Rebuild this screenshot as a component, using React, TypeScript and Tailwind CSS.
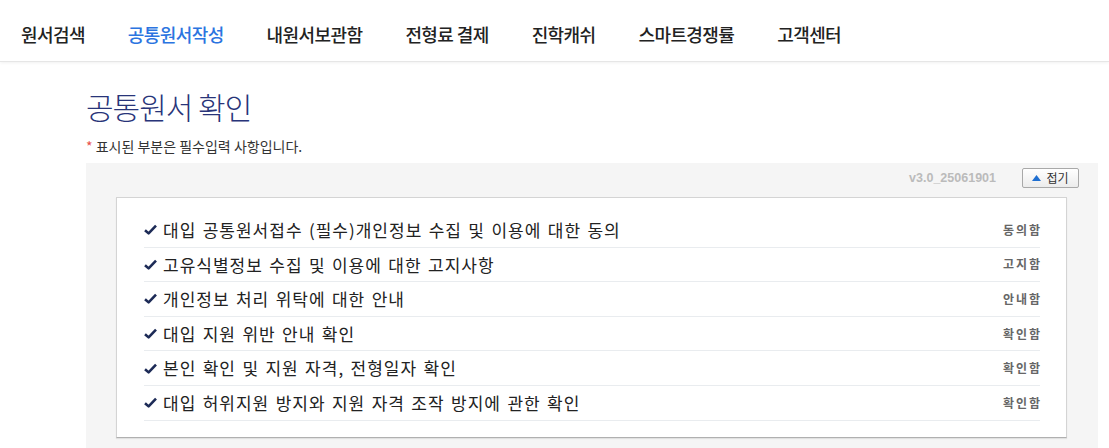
import React from "react";

interface AgreeRow {
  title: string;
  status: string;
}

const navItems = ["원서검색", "공통원서작성", "내원서보관함", "전형료 결제", "진학캐쉬", "스마트경쟁률", "고객센터"];

const rows: AgreeRow[] = [
  { title: "대입 공통원서접수 (필수)개인정보 수집 및 이용에 대한 동의", status: "동의함" },
  { title: "고유식별정보 수집 및 이용에 대한 고지사항", status: "고지함" },
  { title: "개인정보 처리 위탁에 대한 안내", status: "안내함" },
  { title: "대입 지원 위반 안내 확인", status: "확인함" },
  { title: "본인 확인 및 지원 자격, 전형일자 확인", status: "확인함" },
  { title: "대입 허위지원 방지와 지원 자격 조작 방지에 관한 확인", status: "확인함" },
];

const CheckMark = () => (
  <svg width="13" height="11" viewBox="0 0 13 11" className="shrink-0">
    <path d="M1 6.2 L4.6 9.4 L12 1.6" fill="none" stroke="#1d2b57" strokeWidth="2.6" strokeLinejoin="round" />
  </svg>
);

const App: React.FC = () => {
  return (
    <div className="w-[1109px] h-[448px] overflow-hidden bg-white font-['Noto_Sans_CJK_KR','Noto_Sans',sans-serif]">
      {/* Top navigation */}
      <nav className="h-[62px] flex items-center gap-[43px] pl-[21px] pt-[8px] border-b border-[#e6e6e6] shadow-[0_1px_3px_rgba(0,0,0,0.06)]">
        {navItems.map((item, i) => (
          <span
            key={item}
            className={`text-[18px] font-medium tracking-[-0.6px] ${i === 1 ? "text-[#2b74e0]" : "text-[#222]"}`}
          >
            {item}
          </span>
        ))}
      </nav>

      <main className="pl-[86px] pr-[11px]">
        <h1 className="mt-[25px] text-[30px] leading-[38px] font-light text-[#283479] tracking-[-1px]">공통원서 확인</h1>
        <p className="mt-[11px] text-[14px] leading-[20px] text-[#333]">
          <span className="text-[#e8504a]">*</span> 표시된 부분은 필수입력 사항입니다.
        </p>

        {/* Gray panel */}
        <section className="mt-[7px] bg-[#f5f5f5] pt-[5px] pb-[20px] pl-[30px] pr-[19px]">
          <div className="h-[20px] flex items-center justify-end gap-[26px]">
            <span className="text-[12.5px] font-bold text-[#bbb] font-['Liberation_Sans',sans-serif]">v3.0_25061901</span>
            <button className="h-[20px] w-[57px] flex items-center justify-center gap-[5px] border border-[#a9a9a9] rounded-[2px] bg-gradient-to-b from-white to-[#ececec] text-[12px] leading-none text-[#333]">
              <svg width="9" height="6" viewBox="0 0 9 6">
                <path d="M0 6 L4.5 0 L9 6 Z" fill="#1f6fd1" />
              </svg>
              접기
            </button>
          </div>

          <div className="mt-[9px] mr-[12px] bg-white border border-[#d4d4d4] border-b-[#b0b0b0] shadow-[0_1px_1px_rgba(0,0,0,0.08)] pt-[15px] pb-[16px] pl-[27px] pr-[26px]">
            {rows.map((row) => (
              <div
                key={row.title}
                className="h-[34.6px] flex items-center justify-between border-b border-[#e9ecef]"
              >
                <div className="flex items-center gap-[6px]">
                  <CheckMark />
                  <span className="text-[17px] text-[#222] tracking-[1px] [word-spacing:1.6px]">
                    {row.title}
                  </span>
                </div>
                <span className="text-[12px] font-bold text-[#666] tracking-[2px] mr-[-2px]">{row.status}</span>
              </div>
            ))}
          </div>
        </section>
      </main>
    </div>
  );
};

export default App;
